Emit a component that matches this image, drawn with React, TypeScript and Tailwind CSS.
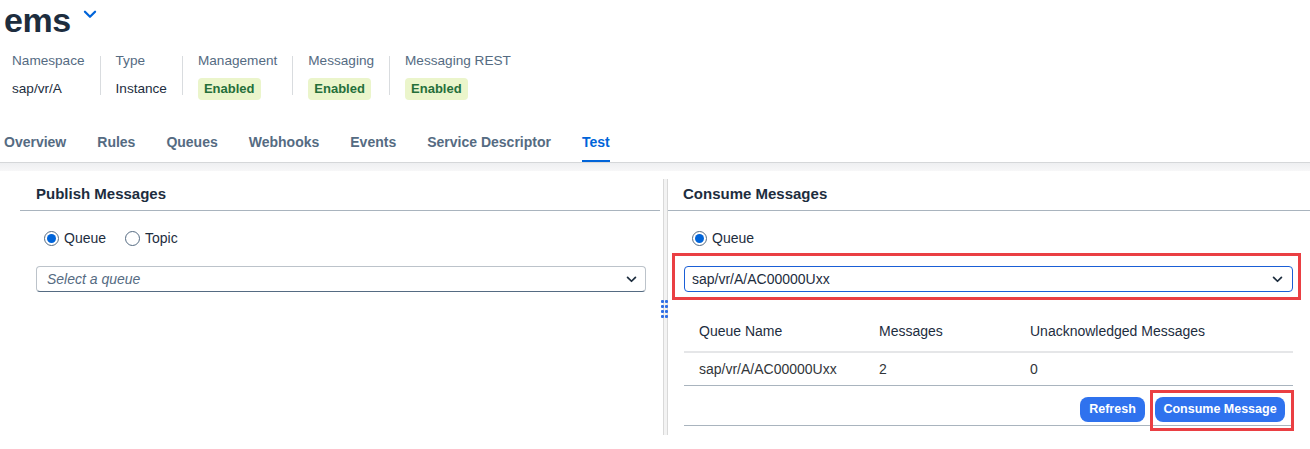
import React from "react"

const attrs = [
  { label: "Namespace", value: "sap/vr/A", badge: false },
  { label: "Type", value: "Instance", badge: false },
  { label: "Management", value: "Enabled", badge: true },
  { label: "Messaging", value: "Enabled", badge: true },
  { label: "Messaging REST", value: "Enabled", badge: true },
]

const tabs = ["Overview", "Rules", "Queues", "Webhooks", "Events", "Service Descriptor", "Test"]

function Chevron({ className = "" }: { className?: string }) {
  return (
    <svg viewBox="0 0 12 8" className={className} fill="none" stroke="currentColor" strokeWidth="2" strokeLinecap="round" strokeLinejoin="round">
      <path d="M1.5 1.5 6 6l4.5-4.5" />
    </svg>
  )
}

function Radio({ label, checked }: { label: string; checked?: boolean }) {
  return (
    <div className="flex items-center gap-[5px]">
      <span className="w-[15px] h-[15px] rounded-full border border-[#556b82] flex items-center justify-center bg-white">
        {checked && <span className="w-[9px] h-[9px] rounded-full bg-[#0064d9]" />}
      </span>
      <span className="text-[14px] text-[#1d2d3e] leading-[20px]">{label}</span>
    </div>
  )
}

function PanelTitle({ children, className = "" }: { children: React.ReactNode; className?: string }) {
  return (
    <div className={`h-[40px] flex items-end pb-[6px] border-b border-[#a9b4be] ${className}`}>
      <h3 className="text-[15px] font-bold text-[#1d2d3e] leading-[20px]">{children}</h3>
    </div>
  )
}

export default function App() {
  return (
    <div className="w-[1310px] h-[449px] bg-white overflow-hidden font-['Liberation_Sans',Arial,sans-serif]">
      {/* Header */}
      <div className="pt-[4px]">
        <div className="flex items-start pl-[4px]">
          <h1 className="text-[34px] font-bold leading-[33px] text-[#1d2d3e] tracking-[-0.5px]">ems</h1>
          <Chevron className="w-[14px] h-[9px] text-[#0064d9] ml-[12px] mt-[6px]" />
        </div>

        {/* Attributes */}
        <div className="flex items-center pl-[12px] mt-[14px]">
          {attrs.map((a, i) => (
            <React.Fragment key={a.label}>
              {i > 0 && <div className="w-px h-[39px] bg-[#d9dcdf]" />}
              <div className={`flex flex-col ${i > 0 ? "pl-[15px]" : ""} pr-[15px]`}>
                <span className="text-[13.6px] leading-[20px] text-[#556b82]">{a.label}</span>
                <div className="h-[22px] mt-[7px] flex items-center">
                  {a.badge ? (
                    <span className="h-[22px] px-[6px] rounded-[4px] bg-[#ebf5cb] text-[#256f3a] text-[13px] font-bold flex items-center">
                      {a.value}
                    </span>
                  ) : (
                    <span className="text-[13.6px] text-[#1d2d3e]">{a.value}</span>
                  )}
                </div>
              </div>
            </React.Fragment>
          ))}
        </div>

        {/* Tabs */}
        <div className="flex gap-[31px] pl-[4px] mt-[22px]">
          {tabs.map((t) => (
            <div
              key={t}
              className={`h-[40px] pt-[2px] flex items-center border-b-2 text-[14px] font-bold ${
                t === "Test" ? "border-[#0064d9] text-[#0064d9]" : "border-transparent text-[#556b82]"
              }`}
            >
              {t}
            </div>
          ))}
        </div>
      </div>

      {/* Shadow band */}
      <div className="h-[9px] border-t border-[#d5d7d9] bg-gradient-to-b from-[#eeeff1] to-[#f7f7f8]" />

      {/* Body */}
      <div className="flex pl-[20px]">
        {/* Publish */}
        <div className="w-[640px]">
          <PanelTitle className="pl-[16px]">Publish Messages</PanelTitle>
          <div className="flex gap-[19px] pl-[24px] mt-[17px]">
            <Radio label="Queue" checked />
            <Radio label="Topic" />
          </div>
          <div className="ml-[16px] mr-[14px] mt-[18px] h-[26px] rounded-[4px] border border-[#bcc3ca] border-b-[#556b82] flex items-center justify-between pl-[10px] pr-[8px]">
            <span className="text-[14px] italic text-[#556b82]">Select a queue</span>
            <Chevron className="w-[11px] h-[7px] text-[#1d2d3e]" />
          </div>
        </div>

        {/* Splitter */}
        <div className="relative ml-[3px] mt-[8px] w-[5px] h-[256px] border-x border-[#d9d9d9] bg-[#f3f3f3]">
          <div className="absolute top-[121px] -left-[3px] grid grid-cols-2 gap-[2px]">
            {Array.from({ length: 8 }).map((_, i) => (
              <span key={i} className="w-[3px] h-[3px] rounded-[1px] bg-[#2f6fe6]" />
            ))}
          </div>
        </div>

        {/* Consume */}
        <div className="flex-1">
          <PanelTitle className="pl-[15px]">Consume Messages</PanelTitle>
          <div className="flex pl-[24px] mt-[17px]">
            <Radio label="Queue" checked />
          </div>
          <div className="relative ml-[16px] mr-[17px] mt-[18px]">
            <div className="h-[26px] rounded-[4px] border border-[#1a5fd6] flex items-center justify-between pl-[7px] pr-[9px]">
              <span className="text-[14px] text-[#1d2d3e]">sap/vr/A/AC00000Uxx</span>
              <Chevron className="w-[11px] h-[7px] text-[#1d2d3e]" />
            </div>
            <div className="absolute -top-[13px] -left-[12px] -right-[8px] -bottom-[8px] border-[3px] border-[#ea3f43] pointer-events-none" />
          </div>

          {/* Table */}
          <div className="ml-[16px] mr-[17px] mt-[20px] text-[14px] text-[#1d2d3e]">
            <div className="grid grid-cols-[180px_151px_1fr] px-[15px] h-[41px] items-center border-b-2 border-[#e5e6e8]">
              <span>Queue Name</span>
              <span>Messages</span>
              <span>Unacknowledged Messages</span>
            </div>
            <div className="grid grid-cols-[180px_151px_1fr] px-[15px] h-[33px] items-center border-b border-[#a9b4be] text-[#32363a]">
              <span>sap/vr/A/AC00000Uxx</span>
              <span>2</span>
              <span>0</span>
            </div>
            <div className="flex justify-end gap-[10px] pr-[8px] pt-[11px] pb-[3px] border-b border-[#a9b4be]">
              <button className="h-[25px] w-[65px] rounded-[8px] bg-[#2f72ee] text-white text-[12.5px] font-bold">Refresh</button>
              <div className="relative">
                <button className="h-[25px] w-[130px] rounded-[8px] bg-[#2f72ee] text-white text-[12.5px] font-bold">Consume Message</button>
                <div className="absolute -top-[7px] -left-[5px] -right-[9px] -bottom-[9px] border-[3px] border-[#ea3f43] pointer-events-none" />
              </div>
            </div>
          </div>
        </div>
      </div>
    </div>
  )
}
